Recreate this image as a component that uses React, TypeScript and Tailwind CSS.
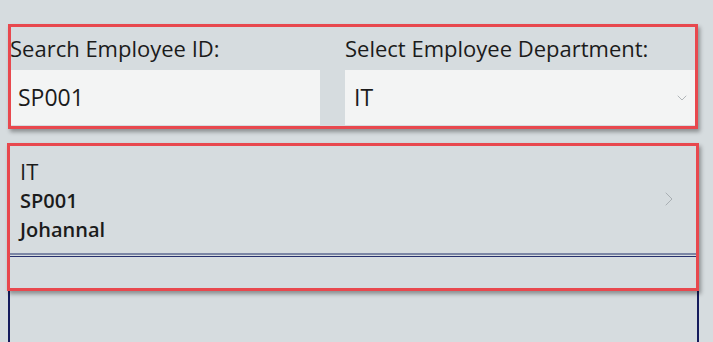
import { ChevronDown, ChevronRight } from "lucide-react";

const ITEMS = [{ dept: "IT", id: "SP001", name: "Johannal" }];

export default function App() {
  return (
    <div
      className="relative w-[713px] h-[342px] overflow-hidden bg-[#d6dcdf] text-[#1b1b1b]"
      style={{ fontFamily: '"Open Sans", "Noto Sans", sans-serif' }}
    >
      {/* Filters */}
      <div className="flex gap-[25px] pl-[10px] pr-[16px] pt-[32px]">
        <div className="w-[310px] flex flex-col gap-[5px]">
          <label className="text-[22px] leading-[33px]">Search Employee ID:</label>
          <div className="h-[55px] bg-[#f3f4f4] flex items-center px-[8px] text-[23px]">
            SP001
          </div>
        </div>
        <div className="flex-1 flex flex-col gap-[5px]">
          <label className="text-[22px] leading-[33px]">Select Employee Department:</label>
          <div className="h-[55px] bg-[#f3f4f4] flex items-center justify-between pl-[9px] pr-[7px] text-[23px]">
            <span>IT</span>
            <ChevronDown className="w-[16px] h-[16px] text-[#a0a6aa]" strokeWidth={1.2} />
          </div>
        </div>
      </div>

      {/* Gallery */}
      <div className="mt-[18px] ml-[8px] w-[691px] h-[220px] border-2 border-[#141b5c]">
        {ITEMS.map((item) => (
          <div key={item.id}>
            <div className="h-[108px] flex items-center justify-between pl-[10px] pr-[16px]">
              <div className="flex flex-col text-[20px] leading-[29px] pt-[2px]">
                <span className="text-[22px]">{item.dept}</span>
                <span className="font-semibold">{item.id}</span>
                <span className="font-semibold">{item.name}</span>
              </div>
              <ChevronRight className="w-6 h-6 text-[#a9afb3]" strokeWidth={1} />
            </div>
            <div className="h-[2px] bg-[#7b86a5]" />
            <div className="h-[1px] bg-[#d6dcdf]" />
            <div className="h-[1px] bg-[#27306e]" />
          </div>
        ))}
      </div>

      {/* Annotation boxes */}
      <div className="absolute left-[8px] top-[24px] w-[690px] h-[105px] border-[3px] border-[#e8484e] shadow-[2px_3px_4px_rgba(0,0,0,0.35)]" />
      <div className="absolute left-[7px] top-[143px] w-[692px] h-[148px] border-[3px] border-[#e8484e] shadow-[2px_3px_4px_rgba(0,0,0,0.35)]" />
    </div>
  );
}
